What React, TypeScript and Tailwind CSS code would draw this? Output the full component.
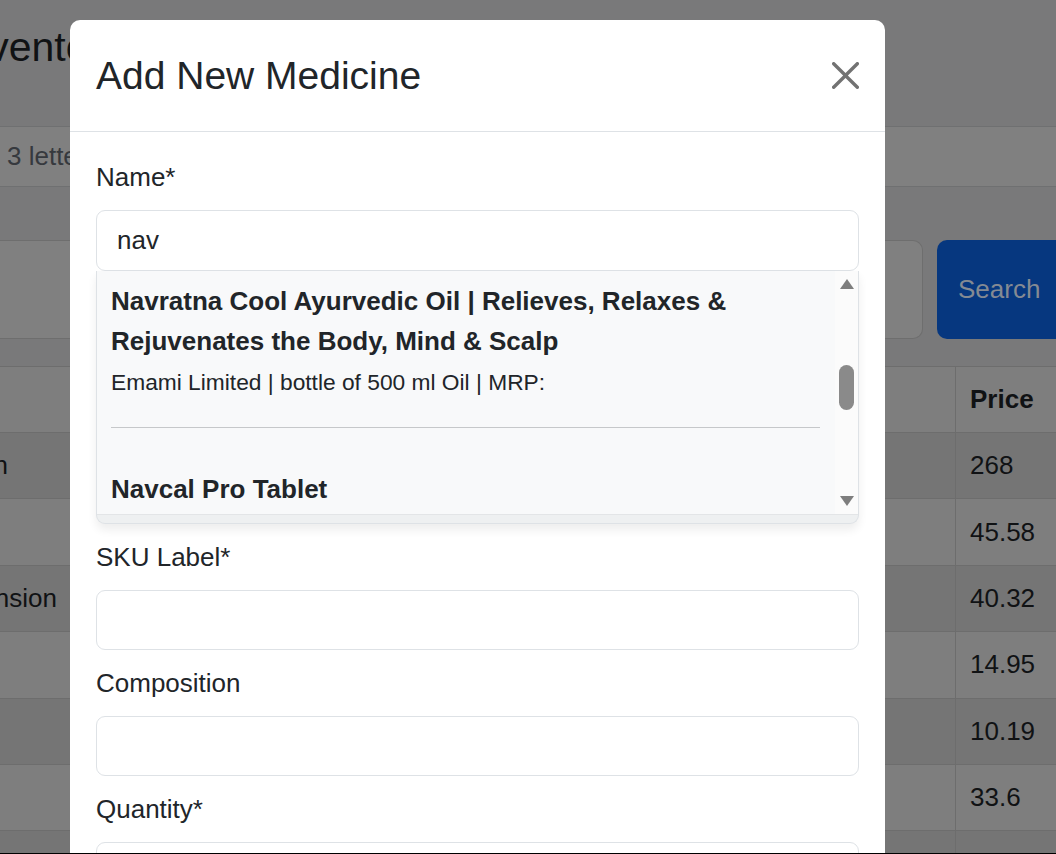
import React from "react";

const ROWS = [
  { name: "Azithromycin", end: 62, price: "268", dark: true },
  { name: "", end: 0, price: "45.58", dark: false },
  { name: "Paracetamol Suspension", end: 13, price: "40.32", dark: true },
  { name: "", end: 0, price: "14.95", dark: false },
  { name: "", end: 0, price: "10.19", dark: true },
  { name: "", end: 0, price: "33.6", dark: false },
  { name: "", end: 0, price: "", dark: true },
];

function CloseIcon() {
  return (
    <svg width="27" height="27" viewBox="0 0 16 16" className="opacity-[0.55]">
      <path
        fill="#000"
        d="M.293.293a1 1 0 0 1 1.414 0L8 6.586 14.293.293a1 1 0 1 1 1.414 1.414L9.414 8l6.293 6.293a1 1 0 0 1-1.414 1.414L8 9.414l-6.293 6.293a1 1 0 0 1-1.414-1.414L6.586 8 .293 1.707a1 1 0 0 1 0-1.414z"
      />
    </svg>
  );
}

function Field({ label }: { label: string }) {
  return (
    <div className="mb-[14px]">
      <div className="text-[26px] leading-[39px] text-[#212529] mb-[13px]">{label}</div>
      <div className="h-[60px] rounded-[9px] border border-[#dee2e6] bg-white" />
    </div>
  );
}

function Suggestions() {
  return (
    <div className="mb-[14px] rounded-b-[9px] border-x border-b border-[#dee2e6] bg-[#eef0f1] pb-[8px] shadow-[0_6px_10px_rgba(0,0,0,0.07)]">
      <div className="flex h-[244px] overflow-hidden border-b border-[#e3e5e7] bg-[#f8f9fa]">
        {/* list */}
        <div className="flex-1 pl-[14px] pr-[15px] pt-[10px] text-[#212529]">
          <div className="text-[26px] font-bold leading-[40px]">
            Navratna Cool Ayurvedic Oil | Relieves, Relaxes &amp; Rejuvenates the Body, Mind &amp; Scalp
          </div>
          <div className="mt-[4px] text-[22.75px] leading-[34px]">
            Emami Limited | bottle of 500 ml Oil | MRP:
          </div>
          <div className="mt-[28px] h-px bg-[#c6c8ca]" />
          <div className="mt-[41px] text-[26px] font-bold leading-[40px]">Navcal Pro Tablet</div>
        </div>
        {/* scrollbar */}
        <div className="flex w-[23px] shrink-0 flex-col items-center bg-[#fbfbfb] pt-[7px]">
          <svg width="16" height="12" viewBox="0 0 16 12">
            <path d="M8 1 L15 11 L1 11 Z" fill="#7e7e7e" />
          </svg>
          <div className="mt-[75px] h-[45px] w-[15px] rounded-full bg-[#8a8a8a]" />
          <div className="flex-1" />
          <svg width="16" height="12" viewBox="0 0 16 12" className="mb-[7px]">
            <path d="M1 1 L15 1 L8 11 Z" fill="#7e7e7e" />
          </svg>
        </div>
      </div>
    </div>
  );
}

export default function App() {
  return (
    <div className="relative h-[854px] w-[1056px] overflow-hidden border-b border-black bg-[#79797a] font-['Liberation_Sans',Arial,sans-serif]">
      {/* dimmed page behind the dialog */}
      <div className="h-[127px] border-b border-[#6f7071] pt-[23px]">
        <h1 className="-ml-[46px] whitespace-nowrap text-[41px] leading-[48px] text-[#101214]">
          Inventory Management
        </h1>
      </div>
      <div className="flex h-[60px] items-center border-b border-[#6f7071] bg-[#808080] pl-[7px] text-[26px] text-[#36393e]">
        3 letters minimum to search
      </div>
      <div className="h-[53px]" />
      <div className="-mr-[11px] flex h-[99px] gap-[14px]">
        <div className="flex-1 rounded-r-[10px] border border-l-0 border-[#6e6e6e] bg-[#808080]" />
        <div className="flex w-[130px] shrink-0 items-center rounded-l-[10px] bg-[#06377f] pl-[21px] text-[26px] text-[#848a93]">
          Search
        </div>
      </div>
      <div className="h-[27px]" />
      <div className="border-t border-[#6d6d6d] text-[26px] text-[#101214]">
        <div className="flex h-[66px] border-b border-[#6d6d6d] bg-[#7e7e7e]">
          <div className="flex-1" />
          <div className="flex w-[101px] shrink-0 items-center border-l border-[#6d6d6d] pl-[14px] font-bold">
            Price
          </div>
        </div>
        {ROWS.map((r, i) => (
          <div
            key={i}
            className={`flex h-[66.4px] border-b border-[#6d6d6d] ${r.dark ? "bg-[#757575]" : "bg-[#7e7e7e]"}`}
          >
            <div className="flex w-[70px] shrink-0 items-center justify-end overflow-hidden whitespace-nowrap" style={{ paddingRight: r.end }}>
              {r.name}
            </div>
            <div className="flex-1" />
            <div className="flex w-[101px] shrink-0 items-center border-l border-[#6d6d6d] pl-[14px]">
              {r.price}
            </div>
          </div>
        ))}
      </div>

      {/* dialog */}
      <div className="absolute left-[70px] top-[20px] w-[815px] rounded-[10px] bg-white">
        <div className="flex h-[112px] items-center justify-between border-b border-[#dee2e6] px-[26px]">
          <h5 className="text-[39px] font-normal leading-[58px] text-[#212529]">Add New Medicine</h5>
          <CloseIcon />
        </div>
        <div className="px-[26px] pt-[26px]">
          <div className="text-[26px] leading-[39px] text-[#212529] mb-[13px]">Name*</div>
          <div className="flex h-[61px] items-center rounded-[9px] border border-[#dee2e6] bg-white px-[20px] text-[26px] text-[#212529]">
            nav
          </div>
          <Suggestions />
          <Field label="SKU Label*" />
          <Field label="Composition" />
          <Field label="Quantity*" />
        </div>
      </div>
    </div>
  );
}
